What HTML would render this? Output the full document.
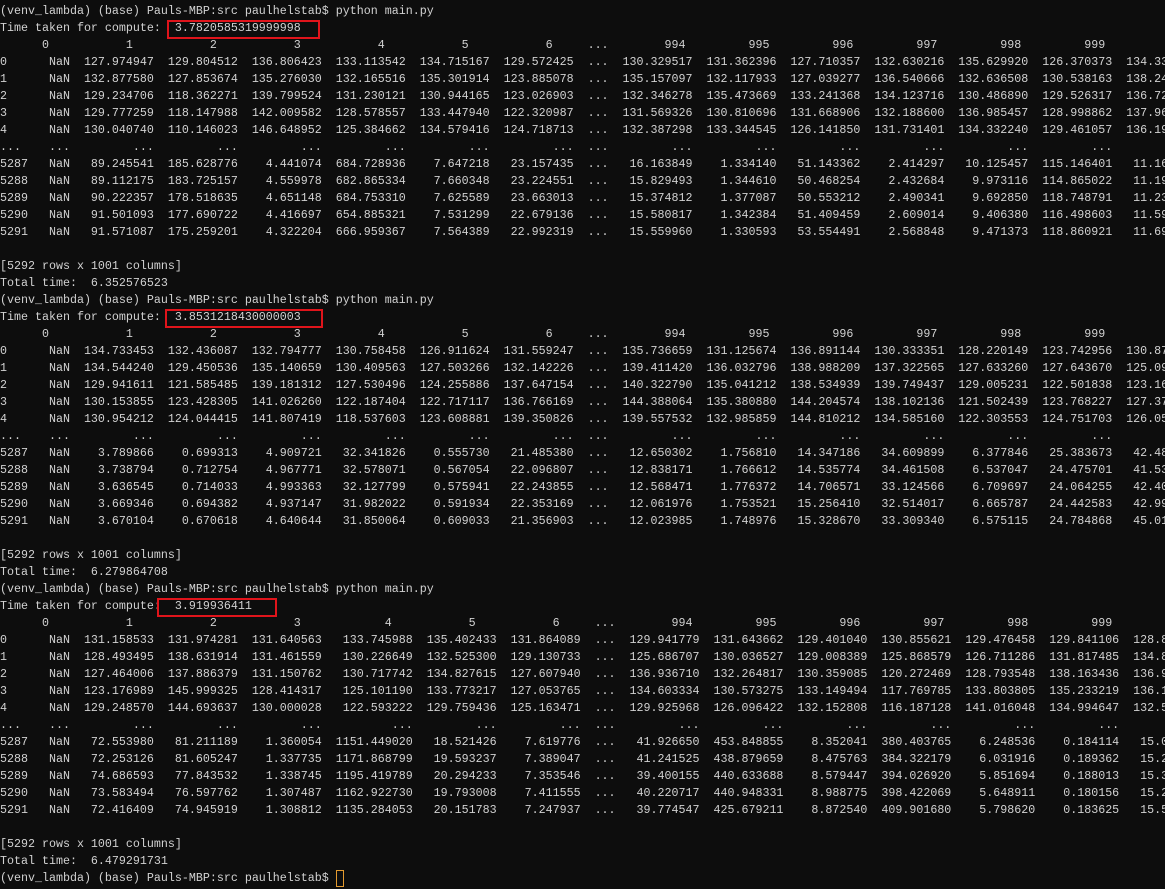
<!DOCTYPE html>
<html><head><meta charset="utf-8"><style>
html,body{margin:0;padding:0;background:#0d0d0d;width:1165px;height:889px;overflow:hidden}
pre{margin:0;padding:3px 0 0 0;font-family:"Liberation Mono",monospace;font-size:11.67px;line-height:17px;color:#d2d2d2;white-space:pre;overflow:hidden;width:1165px}
.box{position:absolute;border:2px solid #e0141b;box-sizing:border-box}
.cur{position:absolute;left:336px;top:870px;width:8px;height:17px;border:1px solid #e39a2f;box-sizing:border-box}
</style></head><body>
<div class="box" style="left:167px;top:20px;width:153px;height:19px"></div>
<div class="box" style="left:165px;top:309px;width:158px;height:19px"></div>
<div class="box" style="left:157px;top:598px;width:120px;height:19px"></div>
<div class="cur"></div>
<pre>(venv_lambda) (base) Pauls-MBP:src paulhelstab$ python main.py
Time taken for compute:  3.7820585319999998
      0           1           2           3           4           5           6     ...        994         995         996         997         998         999
0      NaN  127.974947  129.804512  136.806423  133.113542  134.715167  129.572425  ...  130.329517  131.362396  127.710357  132.630216  135.629920  126.370373  134.330000
1      NaN  132.877580  127.853674  135.276030  132.165516  135.301914  123.885078  ...  135.157097  132.117933  127.039277  136.540666  132.636508  130.538163  138.240000
2      NaN  129.234706  118.362271  139.799524  131.230121  130.944165  123.026903  ...  132.346278  135.473669  133.241368  134.123716  130.486890  129.526317  136.720000
3      NaN  129.777259  118.147988  142.009582  128.578557  133.447940  122.320987  ...  131.569326  130.810696  131.668906  132.188600  136.985457  128.998862  137.960000
4      NaN  130.040740  110.146023  146.648952  125.384662  134.579416  124.718713  ...  132.387298  133.344545  126.141850  131.731401  134.332240  129.461057  136.190000
...    ...         ...         ...         ...         ...         ...         ...  ...         ...         ...         ...         ...         ...         ...         ...
5287   NaN   89.245541  185.628776    4.441074  684.728936    7.647218   23.157435  ...   16.163849    1.334140   51.143362    2.414297   10.125457  115.146401   11.160000
5288   NaN   89.112175  183.725157    4.559978  682.865334    7.660348   23.224551  ...   15.829493    1.344610   50.468254    2.432684    9.973116  114.865022   11.190000
5289   NaN   90.222357  178.518635    4.651148  684.753310    7.625589   23.663013  ...   15.374812    1.377087   50.553212    2.490341    9.692850  118.748791   11.230000
5290   NaN   91.501093  177.690722    4.416697  654.885321    7.531299   22.679136  ...   15.580817    1.342384   51.409459    2.609014    9.406380  116.498603   11.590000
5291   NaN   91.571087  175.259201    4.322204  666.959367    7.564389   22.992319  ...   15.559960    1.330593   53.554491    2.568848    9.471373  118.860921   11.690000

[5292 rows x 1001 columns]
Total time:  6.352576523
(venv_lambda) (base) Pauls-MBP:src paulhelstab$ python main.py
Time taken for compute:  3.8531218430000003
      0           1           2           3           4           5           6     ...        994         995         996         997         998         999
0      NaN  134.733453  132.436087  132.794777  130.758458  126.911624  131.559247  ...  135.736659  131.125674  136.891144  130.333351  128.220149  123.742956  130.870000
1      NaN  134.544240  129.450536  135.140659  130.409563  127.503266  132.142226  ...  139.411420  136.032796  138.988209  137.322565  127.633260  127.643670  125.090000
2      NaN  129.941611  121.585485  139.181312  127.530496  124.255886  137.647154  ...  140.322790  135.041212  138.534939  139.749437  129.005231  122.501838  123.160000
3      NaN  130.153855  123.428305  141.026260  122.187404  122.717117  136.766169  ...  144.388064  135.380880  144.204574  138.102136  121.502439  123.768227  127.370000
4      NaN  130.954212  124.044415  141.807419  118.537603  123.608881  139.350826  ...  139.557532  132.985859  144.810212  134.585160  122.303553  124.751703  126.050000
...    ...         ...         ...         ...         ...         ...         ...  ...         ...         ...         ...         ...         ...         ...         ...
5287   NaN    3.789866    0.699313    4.909721   32.341826    0.555730   21.485380  ...   12.650302    1.756810   14.347186   34.609899    6.377846   25.383673   42.480000
5288   NaN    3.738794    0.712754    4.967771   32.578071    0.567054   22.096807  ...   12.838171    1.766612   14.535774   34.461508    6.537047   24.475701   41.530000
5289   NaN    3.636545    0.714033    4.993363   32.127799    0.575941   22.243855  ...   12.568471    1.776372   14.706571   33.124566    6.709697   24.064255   42.400000
5290   NaN    3.669346    0.694382    4.937147   31.982022    0.591934   22.353169  ...   12.061976    1.753521   15.256410   32.514017    6.665787   24.442583   42.990000
5291   NaN    3.670104    0.670618    4.640644   31.850064    0.609033   21.356903  ...   12.023985    1.748976   15.328670   33.309340    6.575115   24.784868   45.010000

[5292 rows x 1001 columns]
Total time:  6.279864708
(venv_lambda) (base) Pauls-MBP:src paulhelstab$ python main.py
Time taken for compute:  3.919936411
      0           1           2           3            4           5           6     ...        994         995         996         997         998         999
0      NaN  131.158533  131.974281  131.640563   133.745988  135.402433  131.864089  ...  129.941779  131.643662  129.401040  130.855621  129.476458  129.841106  128.800000
1      NaN  128.493495  138.631914  131.461559   130.226649  132.525300  129.130733  ...  125.686707  130.036527  129.008389  125.868579  126.711286  131.817485  134.800000
2      NaN  127.464006  137.886379  131.150762   130.717742  134.827615  127.607940  ...  136.936710  132.264817  130.359085  120.272469  128.793548  138.163436  136.900000
3      NaN  123.176989  145.999325  128.414317   125.101190  133.773217  127.053765  ...  134.603334  130.573275  133.149494  117.769785  133.803805  135.233219  136.100000
4      NaN  129.248570  144.693637  130.000028   122.593222  129.759436  125.163471  ...  129.925968  126.096422  132.152808  116.187128  141.016048  134.994647  132.500000
...    ...         ...         ...         ...          ...         ...         ...  ...         ...         ...         ...         ...         ...         ...         ...
5287   NaN   72.553980   81.211189    1.360054  1151.449020   18.521426    7.619776  ...   41.926650  453.848855    8.352041  380.403765    6.248536    0.184114   15.000000
5288   NaN   72.253126   81.605247    1.337735  1171.868799   19.593237    7.389047  ...   41.241525  438.879659    8.475763  384.322179    6.031916    0.189362   15.200000
5289   NaN   74.686593   77.843532    1.338745  1195.419789   20.294233    7.353546  ...   39.400155  440.633688    8.579447  394.026920    5.851694    0.188013   15.300000
5290   NaN   73.583494   76.597762    1.307487  1162.922730   19.793008    7.411555  ...   40.220717  440.948331    8.988775  398.422069    5.648911    0.180156   15.200000
5291   NaN   72.416409   74.945919    1.308812  1135.284053   20.151783    7.247937  ...   39.774547  425.679211    8.872540  409.901680    5.798620    0.183625   15.500000

[5292 rows x 1001 columns]
Total time:  6.479291731
(venv_lambda) (base) Pauls-MBP:src paulhelstab$ </pre>
</body></html>
